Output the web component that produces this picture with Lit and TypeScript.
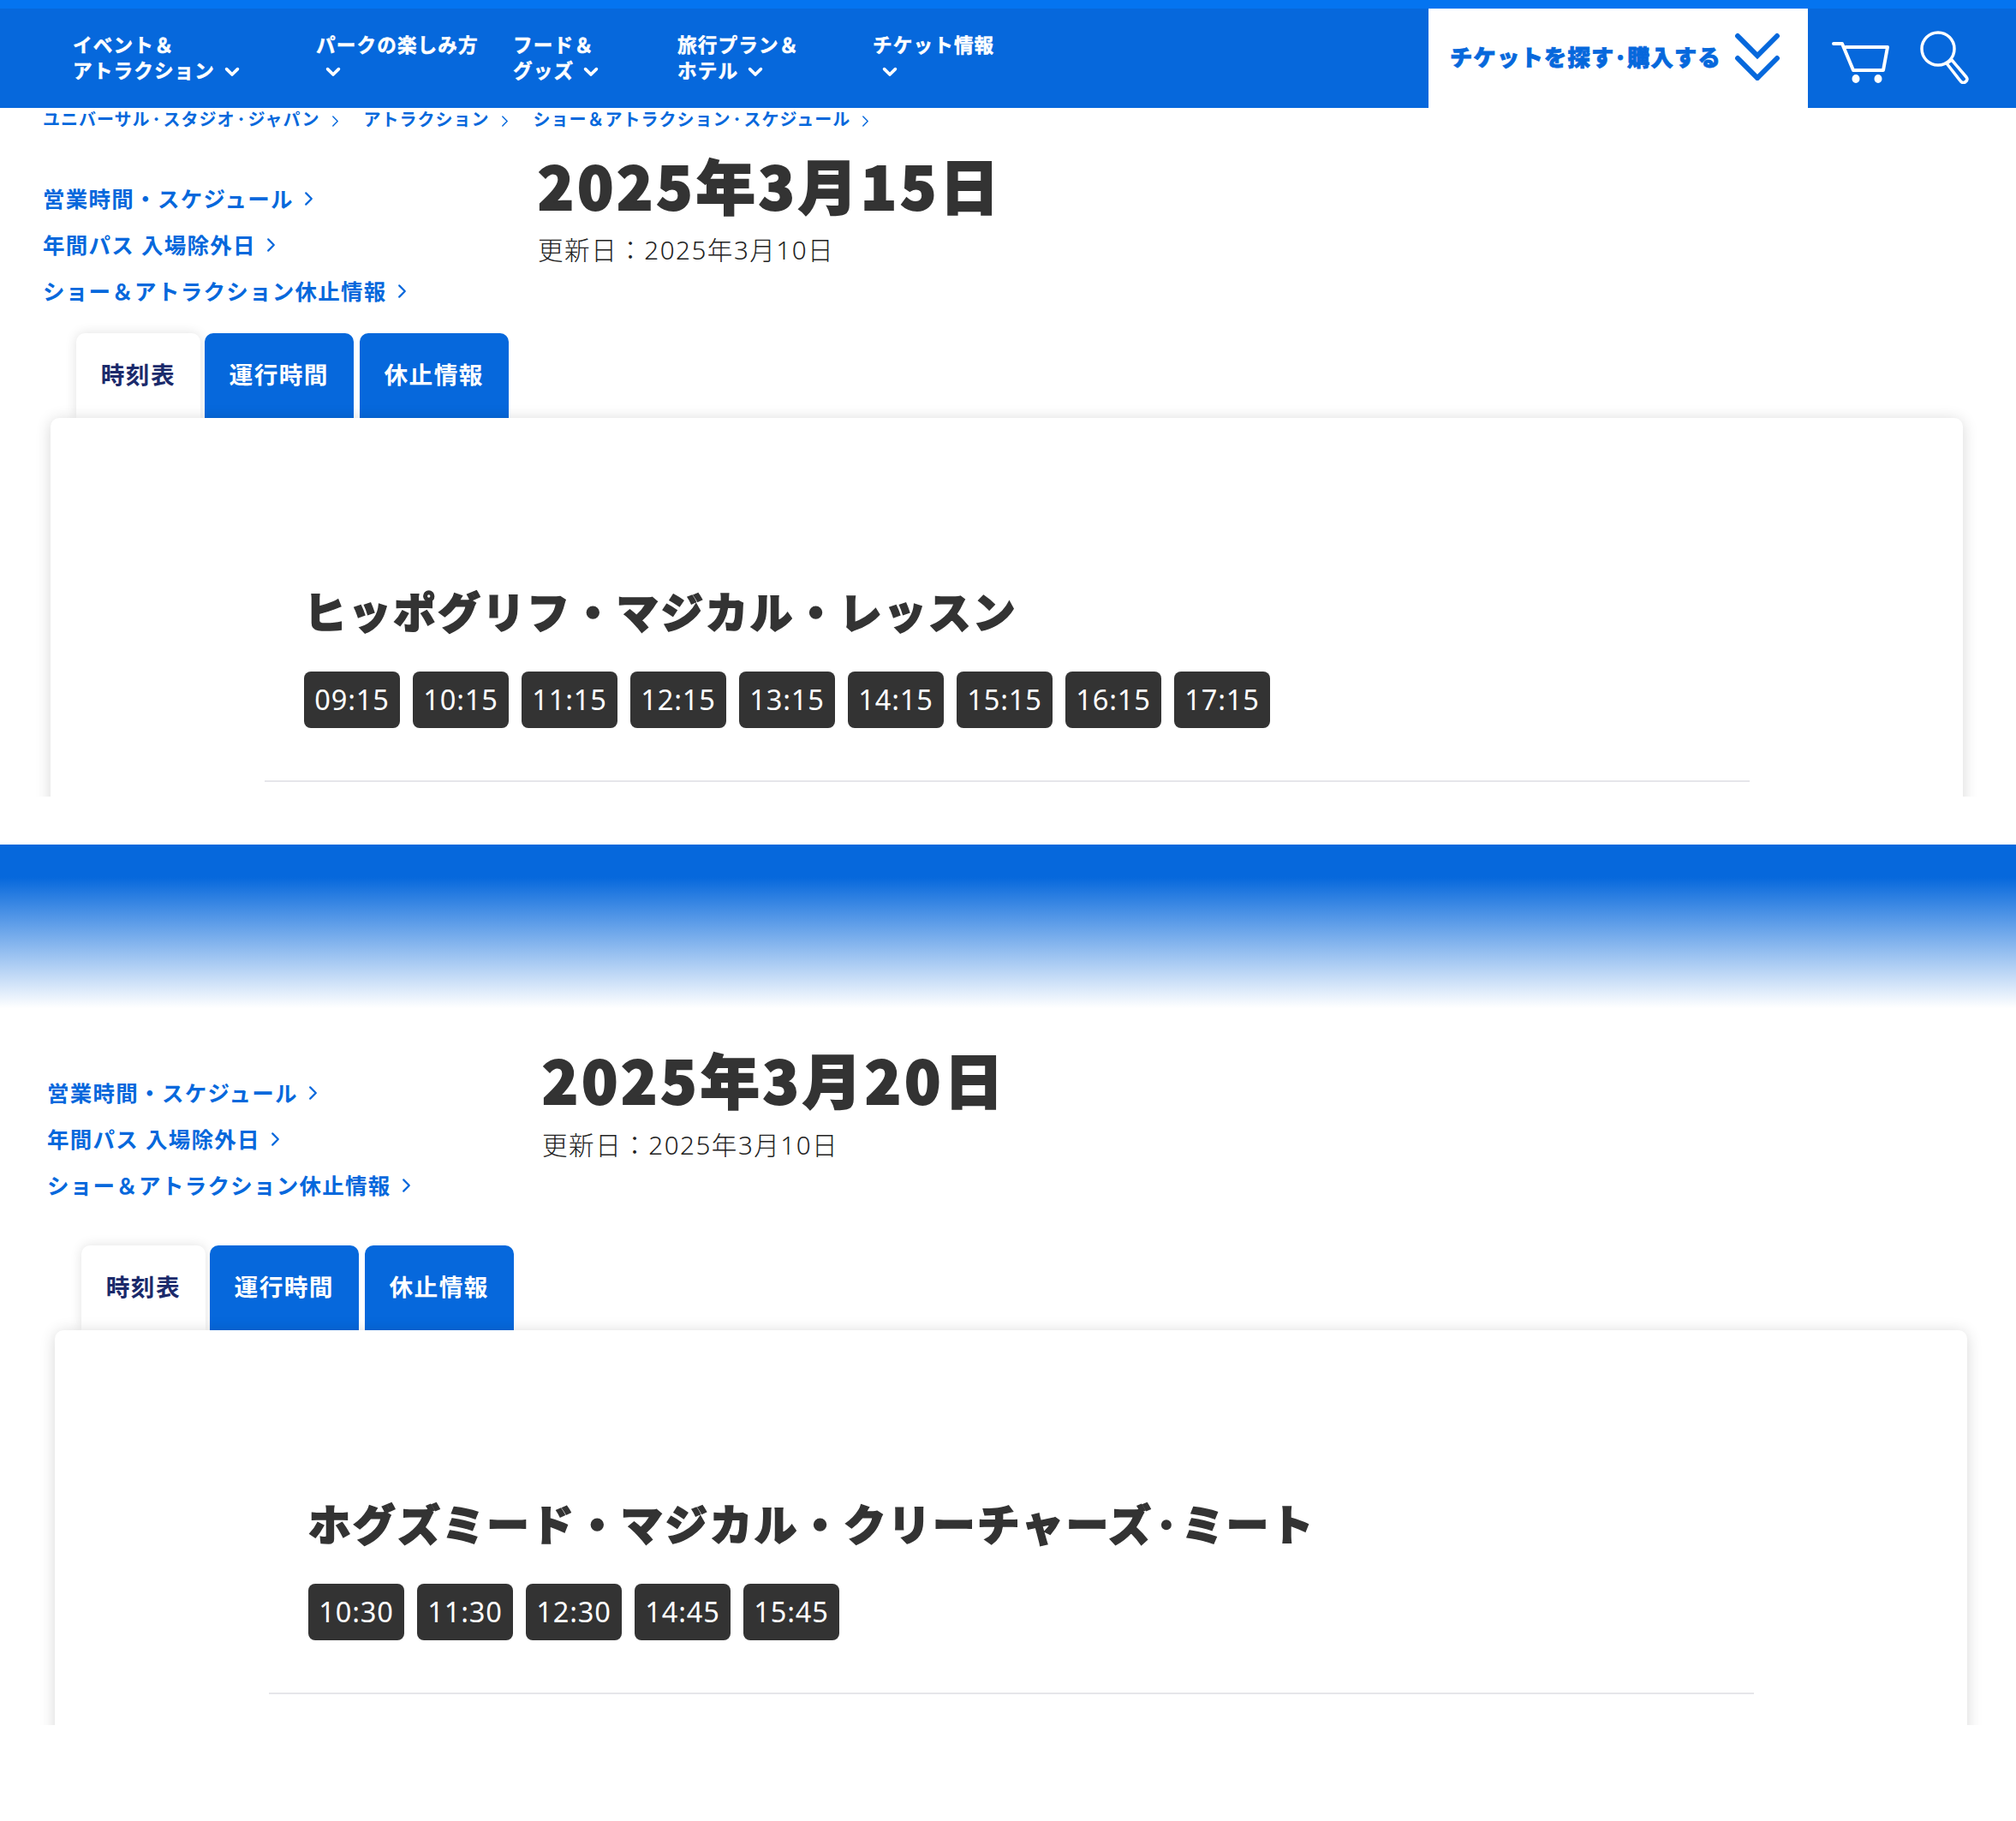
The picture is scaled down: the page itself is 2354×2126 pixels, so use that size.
import { LitElement, html, css, svg } from "lit";
import { customElement } from "lit/decorators.js";

const chev = (c: string) => html`<svg class=${c} viewBox="0 0 10 16" fill="none" stroke="currentColor" stroke-linecap="round" stroke-linejoin="round"><path d="M2 2l6 6-6 6"/></svg>`;
const down = html`<svg class="down" viewBox="0 0 14 10" fill="none" stroke="currentColor" stroke-width="2.8" stroke-linecap="round" stroke-linejoin="round"><path d="M2 2l5 5L12 2"/></svg>`;

const NAV = [
  { w: 284, a: "イベント＆", b: "アトラクション" },
  { w: 230, a: "パークの楽しみ方", b: "" },
  { w: 192, a: "フード＆", b: "グッズ" },
  { w: 228, a: "旅行プラン＆", b: "ホテル" },
  { w: 200, a: "チケット情報", b: "" },
];

@customElement("app-root")
export class AppRoot extends LitElement {
  static styles = css`
    :host { display: block; background: #fff; color: #333; min-height: 2126px; font-family: "Noto Sans", "Noto Sans CJK JP", sans-serif; }
    * { box-sizing: border-box; letter-spacing: .05em; }
    .strip { height: 10px; background: #0474f0; }
    .hdr { height: 116px; background: #0668dc; display: flex; color: #fff; }
    .nav { display: flex; padding-left: 85px; flex: 1; padding-top: 28px; }
    .nav div { font-size: 22.6px; line-height: 30px; font-weight: 700; white-space: nowrap; -webkit-text-stroke: .5px #fff; }
    .down { width: 18px; height: 13px; margin-left: 11px; display: inline-block; }
    .ticket { width: 443px; background: #fff; color: #0668dc; display: flex; align-items: center; padding: 0 0 5px 25px; gap: 15px; font-size: 26.2px; font-weight: 900; white-space: nowrap; -webkit-text-stroke: .8px #0668dc; }
    .dbl { width: 56px; height: 56px; flex: none; }
    .icons { width: 243px; display: flex; align-items: flex-start; padding: 26px 0 0 27px; gap: 34px; }
    .cart { width: 70px; height: 50px; margin-top: 12px; }
    .search { width: 58px; height: 62px; }
    .crumb { display: flex; height: 28px; line-height: 28px; padding-left: 50px; align-items: center; color: #0668dc; font-size: 20px; font-weight: 700; }
    .crumb span { display: flex; align-items: center; white-space: nowrap; }
    .crumb i { font-style: normal; margin: 0 2px; }
    .c1 { width: 9px; height: 15px; stroke-width: 1.6; margin: 3px 29px 0 13px; flex: none; }
    .sec { overflow: hidden; }
    .sec.a { height: 804px; }
    .sec.b { height: 837px; padding-left: 5px; }
    .top { display: grid; grid-template-columns: 578px 1fr; padding-left: 50px; padding-top: 11px; }
    .sec.b .top { padding-top: 32px; }
    .links { padding-top: 38px; display: flex; flex-direction: column; }
    .links a { display: flex; align-items: center; height: 54px; color: #0668dc; font-size: 25.5px; font-weight: 700; white-space: nowrap; }
    .c2 { width: 11px; height: 20px; stroke-width: 2; margin: 3px 0 0 12px; flex: none; }
    h1 { margin: 0; font-family: "Noto Sans CJK JP", sans-serif; font-size: 69px; letter-spacing: .06em; line-height: 100px; font-weight: 900; color: #333; white-space: nowrap; -webkit-text-stroke: 2px #333; }
    .upd { font-size: 29.6px; line-height: 42px; font-weight: 300; margin-top: 6px; color: #222; }
    .sec.b .upd { margin-top: 7px; }
    .tabs { display: flex; margin: 24px 0 0 89px; position: relative; }
    .sec.b .tabs { margin: 45px 0 0 90px; }
    .tab { height: 99px; padding: 0 28.8px; margin-right: 5px; border-radius: 10px 10px 0 0; background: #0668dc; color: #fff; font-size: 27.7px; font-weight: 700; line-height: 97px; }
    .tab + .tab { margin-right: 7px; }
    .tab.on { background: #fff; color: #1b2a6b; box-shadow: 0 0 14px rgba(0,0,0,.12); }
    .card { position: relative; margin: 0 62px 0 59px; height: 600px; background: #fff; border-radius: 10px; box-shadow: 0 2px 18px rgba(0,0,0,.16); }
    .sec.b .card { margin-right: 57px; }
    .inner { margin: 0 249px 0 250px; padding: 187px 0 0 46px; border-bottom: 2px solid #e6e6ea; height: 425px; }
    h2 { margin: 0; font-size: 49.6px; line-height: 80px; font-weight: 900; color: #333; white-space: nowrap; -webkit-text-stroke: 1.5px #333; }
    h2 i { font-style: normal; margin: 0 3px; }
    .times { display: flex; gap: 15px; margin-top: 29px; }
    .times span { width: 112px; height: 66px; background: #333; color: #fff; border-radius: 8px; font-size: 32.6px; letter-spacing: .025em; line-height: 65px; text-align: center; }
    .grad { height: 191px; margin-top: 56px; background: linear-gradient(#0668dc 20%, #fff 100%); }
  `;

  private section(cls: string, date: string, name: unknown, times: string[]) {
    return html`<section class="sec ${cls}">
      ${cls === "a" ? html`<div class="crumb">
        <span>ユニバーサル<i>･</i>スタジオ<i>･</i>ジャパン</span>${chev("c1")}
        <span>アトラクション</span>${chev("c1")}
        <span>ショー＆アトラクション<i>･</i>スケジュール</span>${chev("c1")}
      </div>` : html``}
      <div class="top">
        <div class="links">
          <a>営業時間・スケジュール${chev("c2")}</a>
          <a>年間パス 入場除外日${chev("c2")}</a>
          <a>ショー＆アトラクション休止情報${chev("c2")}</a>
        </div>
        <div>
          <h1>${date}</h1>
          <div class="upd">更新日：2025年3月10日</div>
        </div>
      </div>
      <div class="tabs">
        <div class="tab on">時刻表</div><div class="tab">運行時間</div><div class="tab">休止情報</div>
      </div>
      <div class="card">
        <div class="inner">
          <h2>${name}</h2>
          <div class="times">${times.map((t) => html`<span>${t}</span>`)}</div>
        </div>
      </div>
    </section>`;
  }

  render() {
    return html`
      <div class="strip"></div>
      <header class="hdr">
        <nav class="nav">
          ${NAV.map((n) => html`<div style="width:${n.w}px">${n.a}${n.b ? html`<br>${n.b}${down}` : html`<br>${down}`}</div>`)}
        </nav>
        <div class="ticket">チケットを探す･購入する
          <svg class="dbl" viewBox="0 0 56 56" fill="none" stroke="currentColor" stroke-width="6" stroke-linecap="round" stroke-linejoin="miter"><path d="M4 4l23 23L50 4M4 30l23 23 23-23"/></svg>
        </div>
        <div class="icons">
          <svg class="cart" viewBox="0 0 70 50" fill="none" stroke="#fff" stroke-width="4" stroke-linecap="round" stroke-linejoin="round">
            ${svg`<path d="M3 3h10l13 31h35l5-27H17"/><ellipse cx="29" cy="44" rx="4.500" ry="5" fill="#fff" stroke="none"/><ellipse cx="55" cy="44" rx="4.500" ry="5" fill="#fff" stroke="none"/>`}
          </svg>
          <svg class="search" viewBox="0 0 58 62" fill="none" stroke="#fff" stroke-width="3.5" stroke-linejoin="round">
            ${svg`<circle cx="21" cy="21" r="19"/><path d="M31 38l6-4 17 20c1.500 2 1 4-1 5.500s-4 1.200-5.500-.5z"/>`}
          </svg>
        </div>
      </header>
      ${this.section("a", "2025年3月15日", "ヒッポグリフ・マジカル・レッスン", ["09:15","10:15","11:15","12:15","13:15","14:15","15:15","16:15","17:15"])}
      <div class="grad"></div>
      ${this.section("b", "2025年3月20日", html`ホグズミード・マジカル・クリーチャーズ<i>･</i>ミート`, ["10:30","11:30","12:30","14:45","15:45"])}
    `;
  }
}
